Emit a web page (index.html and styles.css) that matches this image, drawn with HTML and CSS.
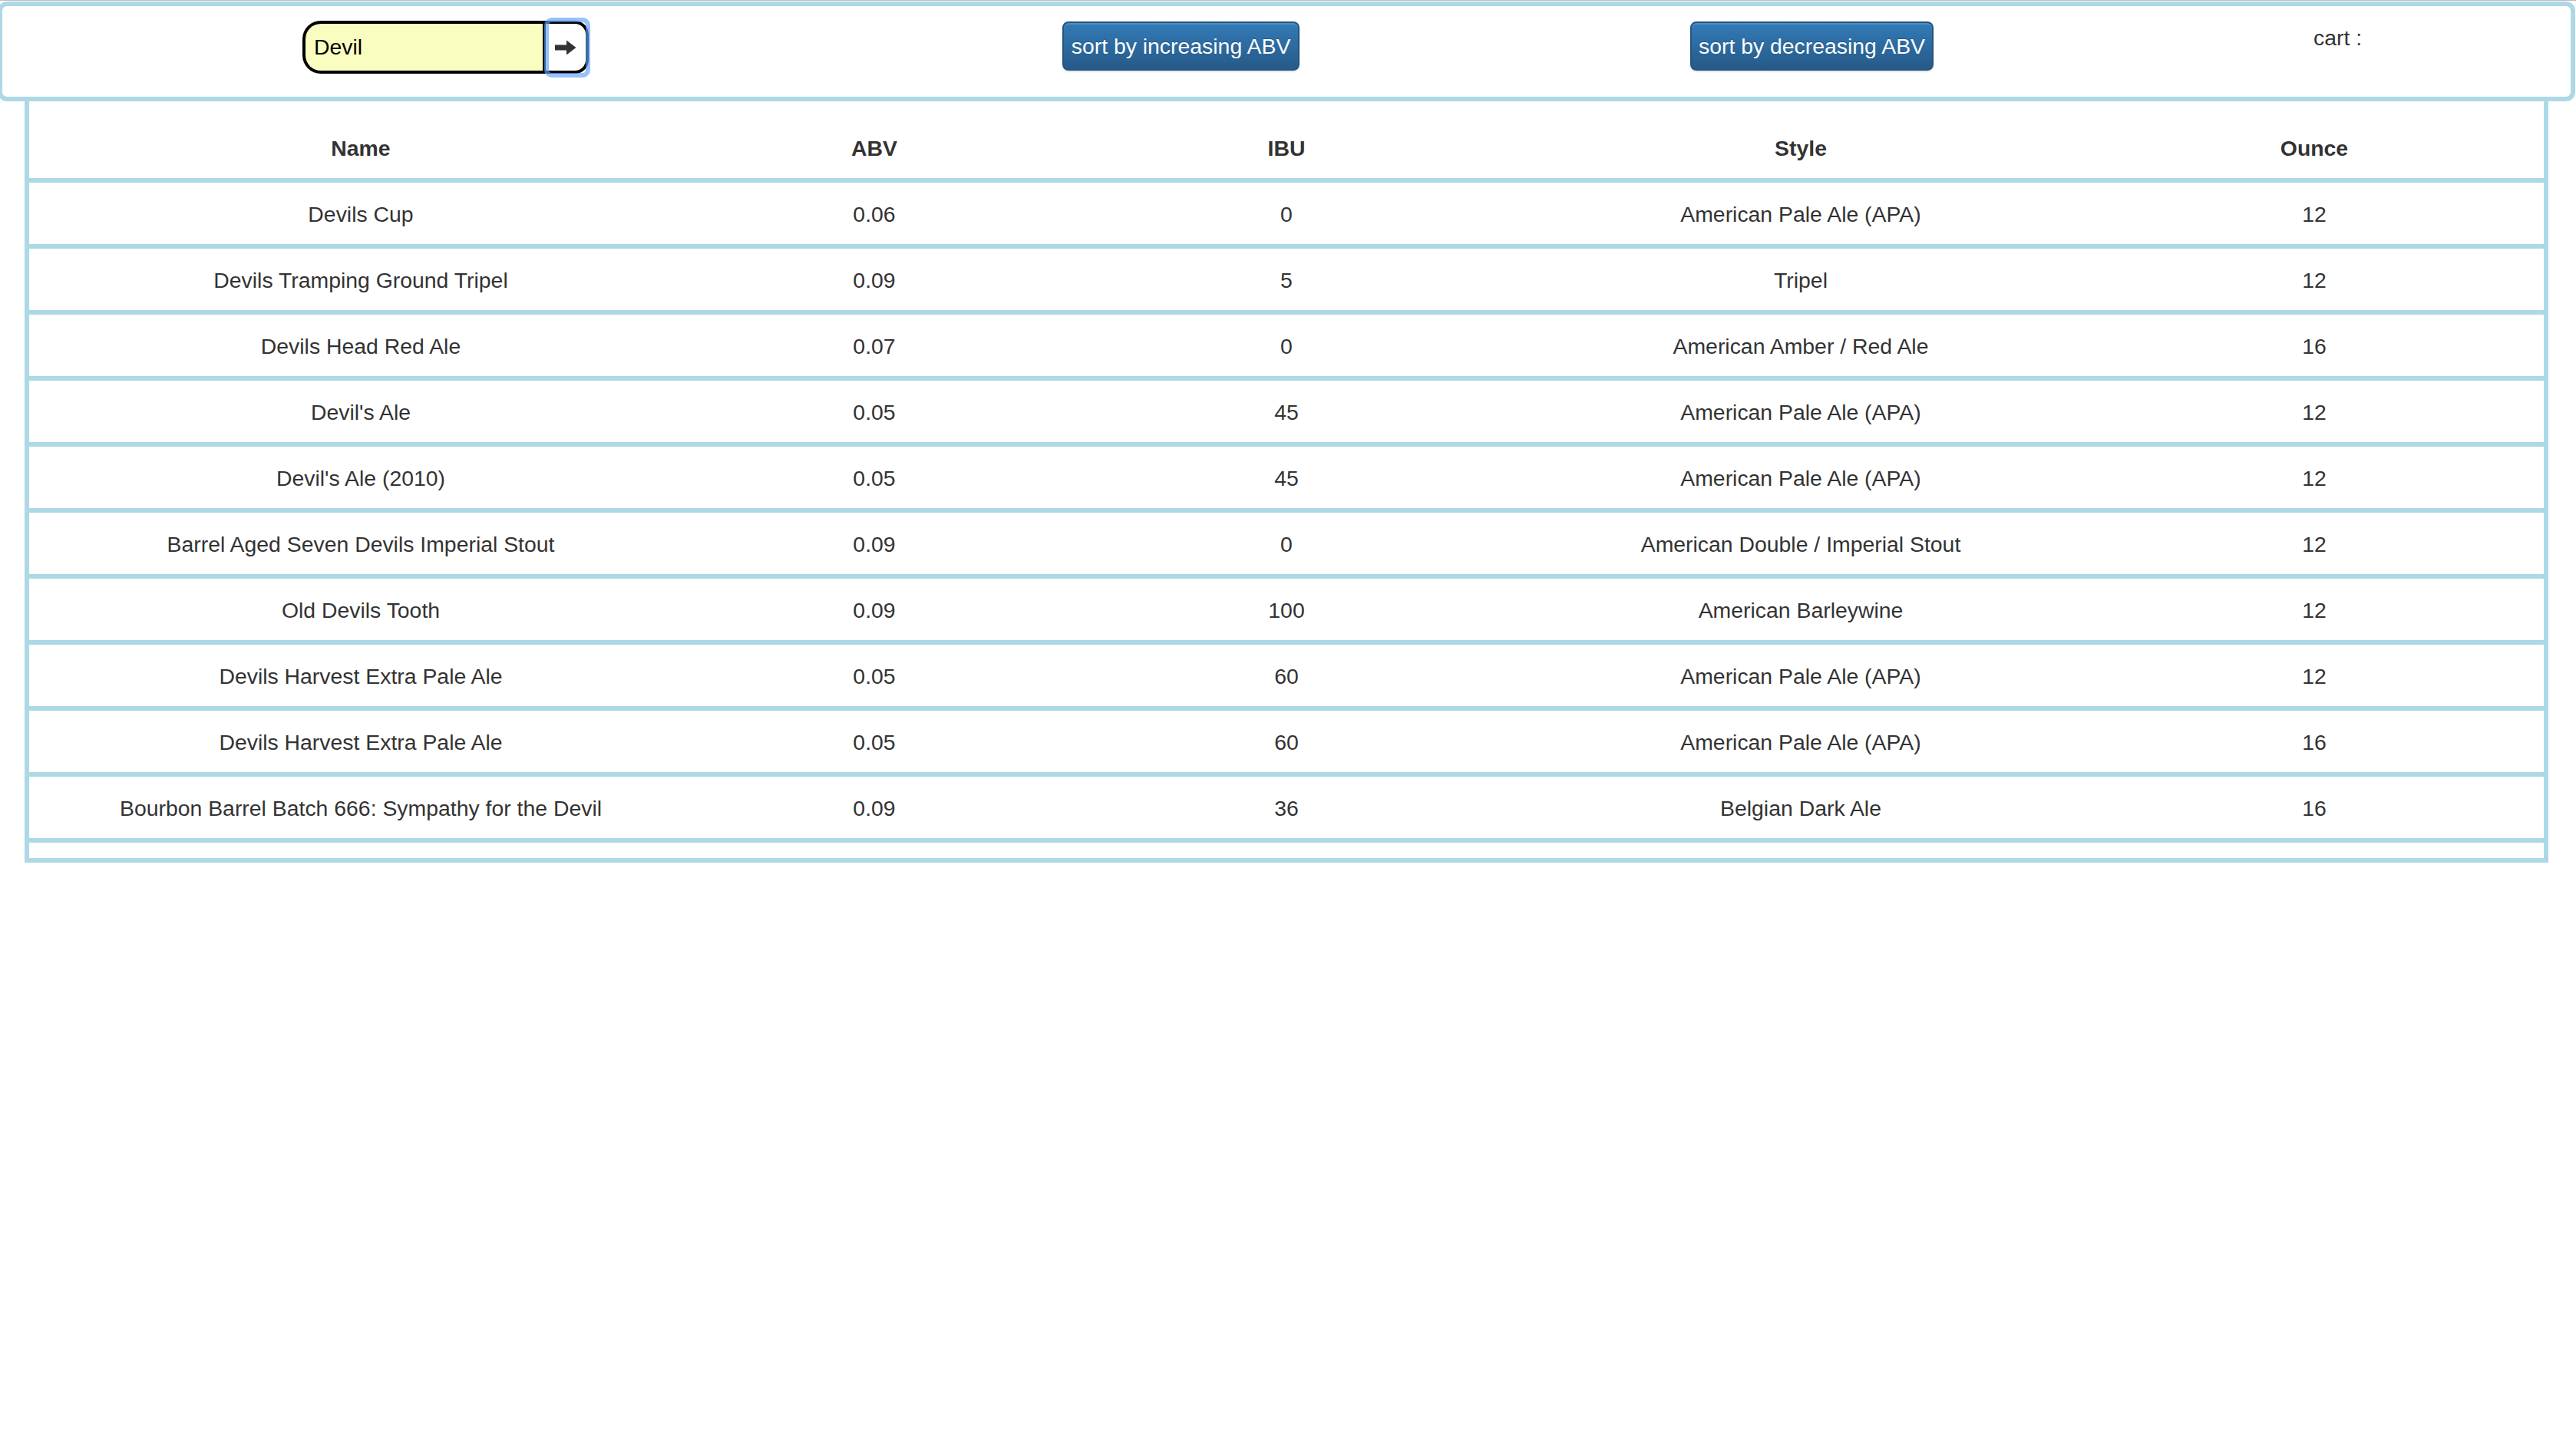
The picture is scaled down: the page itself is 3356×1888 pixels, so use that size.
FILE: index.html
```html
<!DOCTYPE html>
<html lang="en">
<head>
<meta charset="utf-8">
<title>Beers</title>
<link rel="stylesheet" href="styles.css">
</head>
<body>
<div class="page">
  <header class="topbar">
    <form class="search">
      <input class="search-input" type="text" value="Devil">
      <button class="search-btn" type="button" aria-label="search">
        <svg class="arrow" width="28" height="20" viewBox="0 0 28 20"><path d="M0 6.5H15V0.5L27.5 10L15 19.5V13.5H0Z" fill="#333"/></svg>
      </button>
    </form>
    <button class="btn btn-inc" type="button">sort by increasing ABV</button>
    <button class="btn btn-dec" type="button">sort by decreasing ABV</button>
    <div class="cart">cart :</div>
  </header>
  <table class="beers">
    <colgroup>
      <col class="c-name"><col class="c-abv"><col class="c-ibu"><col class="c-style"><col class="c-oz">
    </colgroup>
    <thead>
      <tr><th>Name</th><th>ABV</th><th>IBU</th><th>Style</th><th>Ounce</th></tr>
    </thead>
    <tbody>
      <tr><td>Devils Cup</td><td>0.06</td><td>0</td><td>American Pale Ale (APA)</td><td>12</td></tr>
      <tr><td>Devils Tramping Ground Tripel</td><td>0.09</td><td>5</td><td>Tripel</td><td>12</td></tr>
      <tr><td>Devils Head Red Ale</td><td>0.07</td><td>0</td><td>American Amber / Red Ale</td><td>16</td></tr>
      <tr><td>Devil's Ale</td><td>0.05</td><td>45</td><td>American Pale Ale (APA)</td><td>12</td></tr>
      <tr><td>Devil's Ale (2010)</td><td>0.05</td><td>45</td><td>American Pale Ale (APA)</td><td>12</td></tr>
      <tr><td>Barrel Aged Seven Devils Imperial Stout</td><td>0.09</td><td>0</td><td>American Double / Imperial Stout</td><td>12</td></tr>
      <tr><td>Old Devils Tooth</td><td>0.09</td><td>100</td><td>American Barleywine</td><td>12</td></tr>
      <tr><td>Devils Harvest Extra Pale Ale</td><td>0.05</td><td>60</td><td>American Pale Ale (APA)</td><td>12</td></tr>
      <tr><td>Devils Harvest Extra Pale Ale</td><td>0.05</td><td>60</td><td>American Pale Ale (APA)</td><td>16</td></tr>
      <tr><td>Bourbon Barrel Batch 666: Sympathy for the Devil</td><td>0.09</td><td>36</td><td>Belgian Dark Ale</td><td>16</td></tr>
      <tr class="spacer"><td colspan="5"></td></tr>
    </tbody>
  </table>
</div>
</body>
</html>
```
FILE: styles.css
```css
html, body {
  margin: 0;
  padding: 0;
  background: #fff;
}
body {
  font-family: "Liberation Sans", Arial, Helvetica, sans-serif;
  font-size: 28.4px;
  line-height: 32px;
  color: #333;
  border-top: 1px solid #bdbdbd;
  overflow: hidden;
}
.page {
  padding-top: 1px;
}
.topbar {
  box-sizing: border-box;
  height: 130px;
  width: 3358px;
  margin-left: -3px;
  border: 6px solid lightblue;
  border-radius: 12px;
  display: flex;
  align-items: flex-start;
  padding-top: 19px;
  padding-left: 391px;
}
.search {
  display: flex;
  margin: 0;
  height: 69px;
}
.search-input {
  box-sizing: border-box;
  width: 313px;
  height: 69px;
  margin: 0;
  border: 4px solid #000;
  border-right: none;
  border-radius: 24px 0 0 24px;
  background: #fafdc0;
  padding: 0 0 0 11px;
  font-family: "Liberation Sans", Arial, sans-serif;
  font-size: 28.4px;
  color: #000;
  outline: none;
}
.search-btn {
  position: relative;
  box-sizing: border-box;
  width: 60px;
  height: 69px;
  margin: 0;
  padding: 0 0 0 12px;
  border: 4px solid #000;
  border-radius: 0 18px 18px 0;
  background: #fff;
  display: flex;
  align-items: center;
}
.search-btn::after {
  content: "";
  position: absolute;
  top: -8px;
  bottom: -9px;
  left: -2px;
  right: -6px;
  border: 6px solid rgba(96, 160, 250, 0.65);
  border-radius: 10px;
  pointer-events: none;
}
.arrow {
  display: block;
}
.btn {
  box-sizing: border-box;
  height: 64px;
  margin-top: 1px;
  padding: 0;
  border: 2px solid #245580;
  border-radius: 8px;
  background: linear-gradient(to bottom, #337ab7 0%, #265a88 100%);
  color: #fff;
  font-family: "Liberation Sans", Arial, sans-serif;
  font-size: 28.4px;
  line-height: 32px;
  text-align: center;
  text-shadow: 0 -1px 0 rgba(0, 0, 0, 0.2);
  box-shadow: inset 0 2px 0 rgba(255, 255, 255, 0.15), 0 2px 2px rgba(0, 0, 0, 0.1);
}
.btn-inc {
  width: 309px;
  margin-left: 617px;
}
.btn-dec {
  width: 317px;
  margin-left: 509px;
}
.cart {
  margin-left: 495px;
  margin-top: 6px;
  color: #333;
}
.beers {
  table-layout: fixed;
  width: 3288px;
  margin-left: 32px;
  border-collapse: separate;
  border-spacing: 0;
  border-left: 6px solid lightblue;
  border-right: 6px solid lightblue;
}
.c-name { width: 864px; }
.c-abv { width: 474px; }
.c-ibu { width: 600px; }
.c-style { width: 740px; }
.c-oz { width: 598px; }
.beers th,
.beers td {
  text-align: center;
  border-bottom: 6px solid lightblue;
  white-space: nowrap;
}
.beers th {
  font-weight: bold;
  padding: 45px 0 23px;
  height: 32px;
}
.beers td {
  padding: 25px 0 23px;
  height: 32px;
}
.beers .spacer td {
  padding: 0;
  height: 20px;
}
```
